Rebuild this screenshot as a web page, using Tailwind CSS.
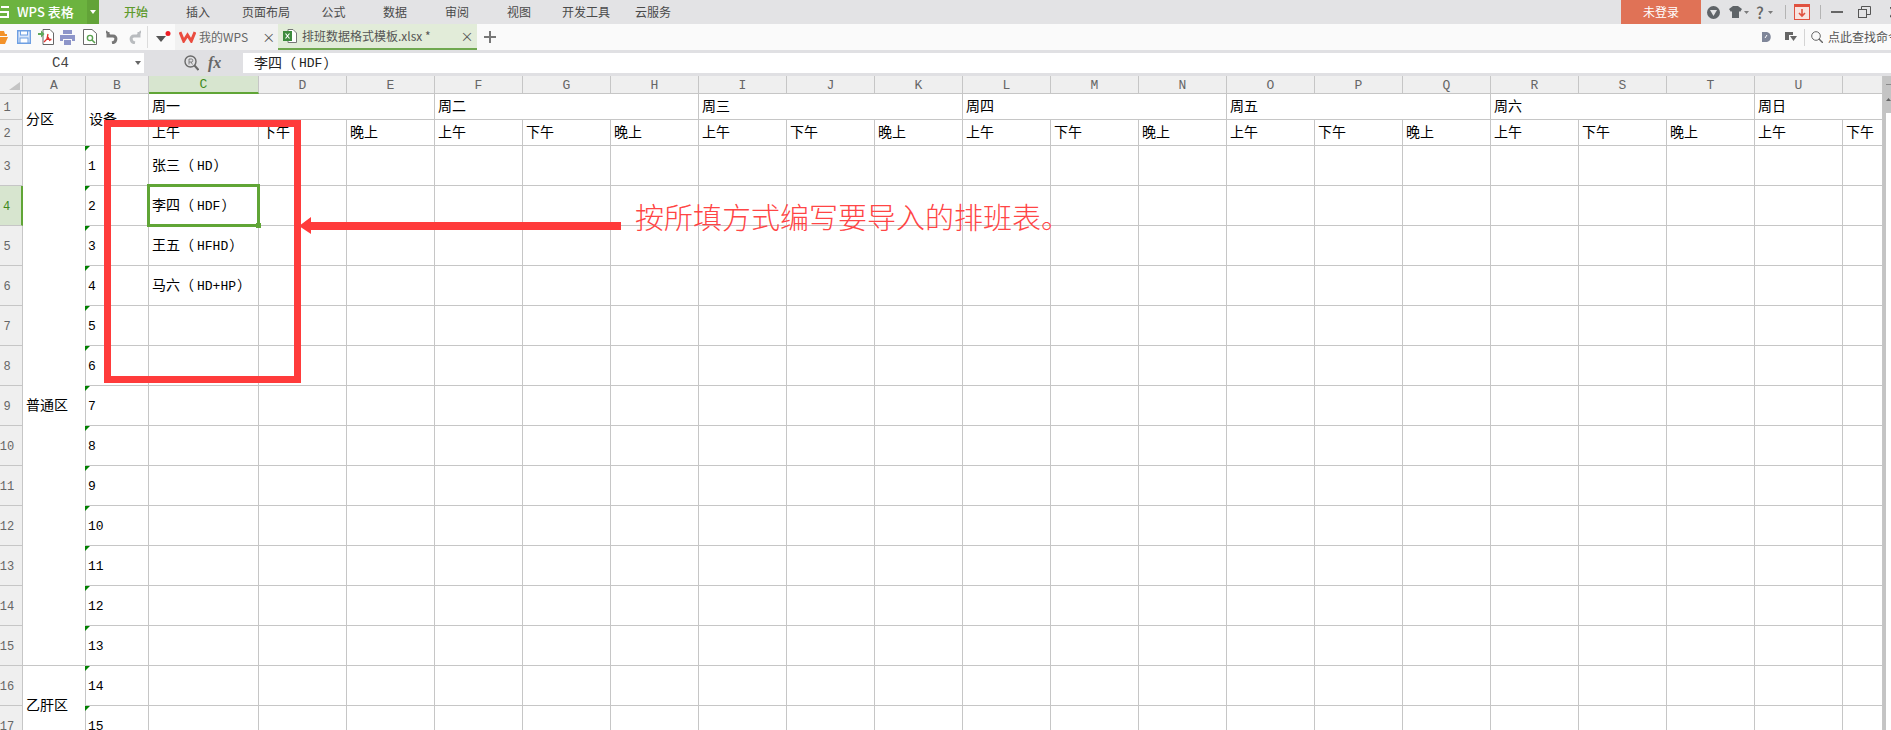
<!DOCTYPE html>
<html lang="zh">
<head>
<meta charset="utf-8">
<title>WPS 表格</title>
<script src="https://cdn.jsdelivr.net/npm/@tailwindcss/browser@4"></script>
</head>
<body class="m-0 overflow-hidden bg-white">
<div class="relative w-[1891px] h-[730px] overflow-hidden flex flex-col font-['Noto_Sans_CJK_SC','Noto_Sans',sans-serif]">

  <!-- ribbon tabs -->
  <div class="h-[24px] shrink-0 flex items-stretch bg-[#e3e3e5] text-[12px] text-[#4a4a4a]">
    <div class="w-[87px] bg-[#6cb33f] flex items-center text-white font-medium text-[13px]">
      <svg class="w-[9px] h-[12px] mr-[8px]" viewBox="0 0 9 12" fill="none" stroke="#fff" stroke-width="2"><path d="M9 1H1M0 6H8V11H0"/></svg>
      <span>WPS 表格</span>
    </div>
    <div class="w-[12px] bg-[#62a338] flex items-center justify-center"><svg class="w-[6px] h-[4px]" viewBox="0 0 6 4" fill="#fff"><path d="M0 0H6L3 4Z"/></svg></div>
    <div class="w-[6px]"></div>
    <div class="w-[62px] flex items-center justify-center font-medium text-[#5f9a2e]">开始</div>
    <div class="w-[62px] flex items-center justify-center">插入</div>
    <div class="w-[74px] flex items-center justify-center">页面布局</div>
    <div class="w-[61px] flex items-center justify-center">公式</div>
    <div class="w-[62px] flex items-center justify-center">数据</div>
    <div class="w-[62px] flex items-center justify-center">审阅</div>
    <div class="w-[62px] flex items-center justify-center">视图</div>
    <div class="w-[72px] flex items-center justify-center">开发工具</div>
    <div class="w-[62px] flex items-center justify-center">云服务</div>

    <div class="ml-auto w-[270px] flex items-stretch overflow-hidden">
      <div class="w-[80px] shrink-0 bg-[#e07256] text-white flex items-center justify-center">未登录</div>
      <div class="flex items-center shrink-0">
        <svg class="ml-[6px] w-[13px] h-[13px]" viewBox="0 0 13 13"><circle cx="6.5" cy="6.5" r="6.5" fill="#5f6468"/><path d="M3 4H10L6.5 10Z" fill="#e3e3e5"/></svg>
        <svg class="ml-[9px] w-[13px] h-[12px]" viewBox="0 0 13 12" fill="#5f6468"><path d="M4 0H9L13 3L11 6L10 5V12H3V5L2 6L0 3Z"/></svg>
        <svg class="ml-[2px] w-[5px] h-[3px]" viewBox="0 0 5 3" fill="#7b7b7b"><path d="M0 0H5L2.5 3Z"/></svg>
        <span class="ml-[7px] w-[9px] text-[16px] font-medium leading-none text-[#666]">?</span>
        <svg class="ml-[3px] w-[5px] h-[3px]" viewBox="0 0 5 3" fill="#7b7b7b"><path d="M0 0H5L2.5 3Z"/></svg>
        <div class="ml-[12px] w-px h-[14px] bg-[#b4b4b4]"></div>
        <svg class="ml-[8px] w-[16px] h-[16px]" viewBox="0 0 16 16" fill="none"><rect x=".5" y=".5" width="15" height="15" fill="#f8e4e0" stroke="#e0513f"/><rect width="16" height="3" fill="#e0513f"/><path d="M8 5V12M5 9L8 12L11 9" stroke="#e0513f" stroke-width="1.6"/></svg>
        <div class="ml-[10px] w-px h-[14px] bg-[#b4b4b4]"></div>
        <div class="ml-[10px] w-[12px] h-[2px] bg-[#666]"></div>
        <svg class="ml-[15px] w-[13px] h-[12px]" viewBox="0 0 13 12" fill="none" stroke="#555"><rect x=".5" y="3.5" width="8" height="8"/><path d="M3.5 3V.5H12.5V8.5H9"/></svg>
        <svg class="ml-[19px] w-[9px] h-[11px] shrink-0" viewBox="0 0 9 11" fill="none" stroke="#555" stroke-width="1.6"><path d="M0 0L8 10M8 0L0 10"/></svg>
      </div>
    </div>
  </div>

  <!-- quick access and document tabs -->
  <div class="h-[26px] shrink-0 flex items-stretch bg-[#fafafa] text-[12px] text-[#555]">
    <div class="w-[175px] flex items-center">
      <svg class="w-[8px] h-[13px]" viewBox="0 0 8 13"><path d="M0 0H4L5 3H7V5H0ZM0 6H8L5 13H0Z" fill="#f39229"/></svg>
      <svg class="ml-[9px] w-[14px] h-[14px]" viewBox="0 0 14 14"><path d="M.7.7H13.3V13.3H.7Z" fill="#d9e6fa" stroke="#6e9fe2" stroke-width="1.4"/><rect x="3.5" y="1" width="7" height="4" fill="#fff" stroke="#6e9fe2"/><rect x="3" y="8" width="8" height="5" fill="#fff" stroke="#6e9fe2"/></svg>
      <svg class="ml-[7px] w-[16px] h-[16px]" viewBox="0 0 16 16"><path d="M5 .5H12L15.5 4V15.5H5Z" fill="#fff" stroke="#666"/><path d="M0 4H3V1.5L6.5 5L3 8.5V6H0Z" fill="#5fa85a"/><path d="M10 5L9 10L6 13M9 10L13.5 10.5M10 8L12 12" fill="none" stroke="#e0302c" stroke-width="1.3"/></svg>
      <svg class="ml-[6px] w-[15px] h-[15px]" viewBox="0 0 15 15" fill="#8d95c9"><rect x="3" y="0" width="9" height="4"/><path d="M0 5H15V11H12V9H3V11H0Z"/><rect x="4" y="10" width="7" height="5"/></svg>
      <svg class="ml-[8px] w-[14px] h-[16px]" viewBox="0 0 14 16" fill="none"><path d="M.5.5H9L13.5 4.5V15.5H.5Z" fill="#fff" stroke="#6a6a6a"/><circle cx="7" cy="9" r="2.6" stroke="#59a14f" stroke-width="1.4"/><path d="M9 11L12 14" stroke="#59a14f" stroke-width="1.6"/></svg>
      <svg class="ml-[9px] w-[12px] h-[14px]" viewBox="0 0 12 14" fill="none" stroke="#777" stroke-width="3"><path d="M2 2V6H7C11 6 11 12 6 13"/><path d="M0 1L4 6" stroke-width="2"/></svg>
      <svg class="ml-[10px] w-[13px] h-[14px]" viewBox="0 0 13 14" fill="none" stroke="#b9bcbf" stroke-width="3"><path d="M11 2V6H6C2 6 2 12 7 13"/><path d="M13 1L9 6" stroke-width="2"/></svg>
      <div class="ml-[6px] w-px h-[22px] bg-[#dcdcdc]"></div>
      <svg class="ml-[8px] w-[15px] h-[13px]" viewBox="0 0 15 13"><path d="M0 5H10L5 11Z" fill="#555"/><circle cx="12" cy="2.5" r="2.5" fill="#ee1c25"/></svg>
    </div>
    <div class="w-[103px] bg-[#f1f1f1] flex items-center">
      <svg class="ml-[4px] w-[17px] h-[12px]" viewBox="0 0 17 12" fill="none" stroke="#ea4c3f" stroke-width="3"><path d="M1 1L4.7 10L8.5 4L12.3 10L16 1"/></svg>
      <span class="ml-[3px] text-[12px] text-[#666]">我的WPS</span>
      <span class="ml-[14px] text-[13px] text-[#555]">×</span>
    </div>
    <div class="w-[199px] bg-[#e2ecd9] border-b-2 border-[#6fa84f] flex items-center">
      <svg class="ml-[5px] w-[14px] h-[14px]" viewBox="0 0 14 14"><path d="M5 .5H10L13.5 4V13.5H5Z" fill="#fff" stroke="#777"/><rect x="0" y="2" width="9" height="10" fill="#3d8b3d"/><path d="M2.5 4.5L6.5 9.5M6.5 4.5L2.5 9.5" stroke="#fff" stroke-width="1.2"/></svg>
      <span class="ml-[5px] text-[#555]">排班数据格式模板.xlsx *</span>
      <span class="ml-[30px] text-[13px] text-[#555]">×</span>
    </div>
    <svg class="ml-[7px] self-center w-[12px] h-[12px]" viewBox="0 0 12 12" fill="#777"><path d="M5 0H7V5H12V7H7V12H5V7H0V5H5Z"/></svg>

    <div class="ml-auto w-[129px] flex items-center overflow-hidden">
      <svg class="w-[9px] h-[10px] shrink-0" viewBox="0 0 9 10"><path d="M0 0H5C10 1 10 9 5 10H0Z" fill="#7f8699"/><path d="M3 6L5 3" stroke="#fff"/></svg>
      <svg class="ml-[14px] w-[12px] h-[10px] shrink-0" viewBox="0 0 12 10" fill="#666"><path d="M0 0H8V3H4V8H0Z"/><path d="M5 4H12L8.5 9Z"/></svg>
      <div class="ml-[7px] w-px h-[17px] bg-[#d4d4d4] shrink-0"></div>
      <svg class="ml-[6px] w-[12px] h-[12px] shrink-0" viewBox="0 0 12 12" fill="none" stroke="#666"><circle cx="5" cy="5" r="4.3"/><path d="M8 8L12 12" stroke-width="1.4"/></svg>
      <span class="ml-[5px] whitespace-nowrap text-[#555]">点此查找命令</span>
    </div>
  </div>

  <!-- formula bar -->
  <div class="h-[26px] shrink-0 flex bg-[#e0e0e3] pt-[3px] pb-[3px]">
    <div class="relative w-[144px] bg-white flex items-center text-[14px] text-[#444] font-['Liberation_Mono',monospace]">
      <span class="ml-[52px]">C4</span>
      <svg class="absolute right-[3px] top-[8px] w-[6px] h-[4px]" viewBox="0 0 6 4" fill="#666"><path d="M0 0H6L3 4Z"/></svg>
    </div>
    <div class="w-[99px] flex items-center">
      <svg class="ml-[40px] w-[15px] h-[16px]" viewBox="0 0 15 16" fill="none" stroke="#6a6a6a"><circle cx="6.5" cy="6.5" r="5.5" stroke-width="1.4"/><path d="M10.5 10.5L14.5 15" stroke-width="2"/><path d="M5 9.5V4H8C9 4 9 7 8 7H5M7 7L8.5 9.5" stroke-width=".8"/></svg>
      <span class="ml-[9px] text-[16px] italic font-bold text-[#666] font-['Liberation_Serif',serif]">fx</span>
    </div>
    <div class="flex-1 bg-white flex items-center pl-[11px] pt-[2px] text-[14px] text-[#222] font-['Liberation_Mono','Noto_Sans_CJK_SC',monospace]">李四（<span class="text-[13px] ml-[3px] mr-[1px]">HDF</span>）</div>
  </div>

  <!-- sheet -->
  <div class="flex-1 min-h-0 flex items-start overflow-hidden">
    <div class="w-[1883px] shrink-0 grid grid-cols-[23px_63px_63px_110px_repeat(18,88px)_1fr] grid-rows-[18px_26px_26px_repeat(15,40px)] text-[14px] text-black font-['Liberation_Mono','Noto_Sans_CJK_SC',monospace] [&>div]:pt-[2px] [&>div]:border-r [&>div]:border-b [&>div]:border-[#c6c6c6]">
      <!-- column headers -->
      <div class="bg-[#efefef] flex items-center justify-center"><svg class="w-[11px] h-[8px] ml-[6px]" viewBox="0 0 11 8" fill="#c4c4c4"><path d="M11 0V8H0Z"/></svg></div>
      <div class="bg-[#efefef] text-[13px] text-[#666] flex items-center justify-center">A</div>
      <div class="bg-[#efefef] text-[13px] text-[#666] flex items-center justify-center">B</div>
      <div class="bg-[#d7e5cf] text-[13px] text-[#3f8a1c] flex items-center justify-center border-b-2! border-b-[#60a536]!">C</div>
      <div class="bg-[#efefef] text-[13px] text-[#666] flex items-center justify-center">D</div>
      <div class="bg-[#efefef] text-[13px] text-[#666] flex items-center justify-center">E</div>
      <div class="bg-[#efefef] text-[13px] text-[#666] flex items-center justify-center">F</div>
      <div class="bg-[#efefef] text-[13px] text-[#666] flex items-center justify-center">G</div>
      <div class="bg-[#efefef] text-[13px] text-[#666] flex items-center justify-center">H</div>
      <div class="bg-[#efefef] text-[13px] text-[#666] flex items-center justify-center">I</div>
      <div class="bg-[#efefef] text-[13px] text-[#666] flex items-center justify-center">J</div>
      <div class="bg-[#efefef] text-[13px] text-[#666] flex items-center justify-center">K</div>
      <div class="bg-[#efefef] text-[13px] text-[#666] flex items-center justify-center">L</div>
      <div class="bg-[#efefef] text-[13px] text-[#666] flex items-center justify-center">M</div>
      <div class="bg-[#efefef] text-[13px] text-[#666] flex items-center justify-center">N</div>
      <div class="bg-[#efefef] text-[13px] text-[#666] flex items-center justify-center">O</div>
      <div class="bg-[#efefef] text-[13px] text-[#666] flex items-center justify-center">P</div>
      <div class="bg-[#efefef] text-[13px] text-[#666] flex items-center justify-center">Q</div>
      <div class="bg-[#efefef] text-[13px] text-[#666] flex items-center justify-center">R</div>
      <div class="bg-[#efefef] text-[13px] text-[#666] flex items-center justify-center">S</div>
      <div class="bg-[#efefef] text-[13px] text-[#666] flex items-center justify-center">T</div>
      <div class="bg-[#efefef] text-[13px] text-[#666] flex items-center justify-center">U</div>
      <div class="bg-[#efefef]"></div>

      <!-- row 1 -->
      <div class="bg-[#efefef] text-[12px] text-[#666] flex items-center justify-center pr-[8px]">1</div>
      <div class="row-span-2 flex items-center pl-[3px]">分区</div>
      <div class="row-span-2 flex items-center pl-[3px]">设备</div>
      <div class="col-span-3 flex items-center pl-[3px]">周一</div>
      <div class="col-span-3 flex items-center pl-[3px]">周二</div>
      <div class="col-span-3 flex items-center pl-[3px]">周三</div>
      <div class="col-span-3 flex items-center pl-[3px]">周四</div>
      <div class="col-span-3 flex items-center pl-[3px]">周五</div>
      <div class="col-span-3 flex items-center pl-[3px]">周六</div>
      <div class="col-span-2 flex items-center pl-[3px]">周日</div>

      <!-- row 2 -->
      <div class="bg-[#efefef] text-[12px] text-[#666] flex items-center justify-center pr-[8px]">2</div>
      <div class="flex items-center pl-[3px]">上午</div><div class="flex items-center pl-[3px]">下午</div><div class="flex items-center pl-[3px]">晚上</div>
      <div class="flex items-center pl-[3px]">上午</div><div class="flex items-center pl-[3px]">下午</div><div class="flex items-center pl-[3px]">晚上</div>
      <div class="flex items-center pl-[3px]">上午</div><div class="flex items-center pl-[3px]">下午</div><div class="flex items-center pl-[3px]">晚上</div>
      <div class="flex items-center pl-[3px]">上午</div><div class="flex items-center pl-[3px]">下午</div><div class="flex items-center pl-[3px]">晚上</div>
      <div class="flex items-center pl-[3px]">上午</div><div class="flex items-center pl-[3px]">下午</div><div class="flex items-center pl-[3px]">晚上</div>
      <div class="flex items-center pl-[3px]">上午</div><div class="flex items-center pl-[3px]">下午</div><div class="flex items-center pl-[3px]">晚上</div>
      <div class="flex items-center pl-[3px]">上午</div><div class="flex items-center pl-[3px]">下午</div>

      <!-- row 3 -->
      <div class="bg-[#efefef] text-[12px] text-[#666] flex items-center justify-center pr-[8px]">3</div>
      <div class="row-span-13 flex items-center pl-[3px]">普通区</div>
      <div class="relative flex items-center pl-[2px]"><i class="absolute -left-px top-0 w-[5px] h-[5px] bg-[#008000] [clip-path:polygon(0_0,100%_0,0_100%)]"></i><span class="text-[13px]">1</span></div>
      <div class="flex items-center pl-[3px]">张三（<span class="text-[13px] ml-[3px] mr-[1px]">HD</span>）</div><div></div><div></div><div></div><div></div><div></div><div></div><div></div><div></div><div></div><div></div><div></div><div></div><div></div><div></div><div></div><div></div><div></div><div></div><div></div>

      <!-- row 4 -->
      <div class="bg-[#d7e5cf] text-[12px] text-[#3f8a1c] flex items-center justify-center pr-[8px] border-r-2! border-r-[#60a536]!">4</div>
      <div class="relative flex items-center pl-[2px]"><i class="absolute -left-px top-0 w-[5px] h-[5px] bg-[#008000] [clip-path:polygon(0_0,100%_0,0_100%)]"></i><span class="text-[13px]">2</span></div>
      <div class="flex items-center pl-[3px]">李四（<span class="text-[13px] ml-[3px] mr-[1px]">HDF</span>）</div><div></div><div></div><div></div><div></div><div></div><div></div><div></div><div></div><div></div><div></div><div></div><div></div><div></div><div></div><div></div><div></div><div></div><div></div><div></div>

      <!-- row 5 -->
      <div class="bg-[#efefef] text-[12px] text-[#666] flex items-center justify-center pr-[8px]">5</div>
      <div class="relative flex items-center pl-[2px]"><i class="absolute -left-px top-0 w-[5px] h-[5px] bg-[#008000] [clip-path:polygon(0_0,100%_0,0_100%)]"></i><span class="text-[13px]">3</span></div>
      <div class="flex items-center pl-[3px]">王五（<span class="text-[13px] ml-[3px] mr-[1px]">HFHD</span>）</div><div></div><div></div><div></div><div></div><div></div><div></div><div></div><div></div><div></div><div></div><div></div><div></div><div></div><div></div><div></div><div></div><div></div><div></div><div></div>

      <!-- row 6 -->
      <div class="bg-[#efefef] text-[12px] text-[#666] flex items-center justify-center pr-[8px]">6</div>
      <div class="relative flex items-center pl-[2px]"><i class="absolute -left-px top-0 w-[5px] h-[5px] bg-[#008000] [clip-path:polygon(0_0,100%_0,0_100%)]"></i><span class="text-[13px]">4</span></div>
      <div class="flex items-center pl-[3px]">马六（<span class="text-[13px] ml-[3px] mr-[1px]">HD+HP</span>）</div><div></div><div></div><div></div><div></div><div></div><div></div><div></div><div></div><div></div><div></div><div></div><div></div><div></div><div></div><div></div><div></div><div></div><div></div><div></div>

      <!-- row 7 -->
      <div class="bg-[#efefef] text-[12px] text-[#666] flex items-center justify-center pr-[8px]">7</div>
      <div class="relative flex items-center pl-[2px]"><i class="absolute -left-px top-0 w-[5px] h-[5px] bg-[#008000] [clip-path:polygon(0_0,100%_0,0_100%)]"></i><span class="text-[13px]">5</span></div>
      <div></div><div></div><div></div><div></div><div></div><div></div><div></div><div></div><div></div><div></div><div></div><div></div><div></div><div></div><div></div><div></div><div></div><div></div><div></div><div></div>

      <!-- row 8 -->
      <div class="bg-[#efefef] text-[12px] text-[#666] flex items-center justify-center pr-[8px]">8</div>
      <div class="relative flex items-center pl-[2px]"><i class="absolute -left-px top-0 w-[5px] h-[5px] bg-[#008000] [clip-path:polygon(0_0,100%_0,0_100%)]"></i><span class="text-[13px]">6</span></div>
      <div></div><div></div><div></div><div></div><div></div><div></div><div></div><div></div><div></div><div></div><div></div><div></div><div></div><div></div><div></div><div></div><div></div><div></div><div></div><div></div>

      <!-- row 9 -->
      <div class="bg-[#efefef] text-[12px] text-[#666] flex items-center justify-center pr-[8px]">9</div>
      <div class="relative flex items-center pl-[2px]"><i class="absolute -left-px top-0 w-[5px] h-[5px] bg-[#008000] [clip-path:polygon(0_0,100%_0,0_100%)]"></i><span class="text-[13px]">7</span></div>
      <div></div><div></div><div></div><div></div><div></div><div></div><div></div><div></div><div></div><div></div><div></div><div></div><div></div><div></div><div></div><div></div><div></div><div></div><div></div><div></div>

      <!-- row 10 -->
      <div class="bg-[#efefef] text-[12px] text-[#666] flex items-center justify-center pr-[8px]">10</div>
      <div class="relative flex items-center pl-[2px]"><i class="absolute -left-px top-0 w-[5px] h-[5px] bg-[#008000] [clip-path:polygon(0_0,100%_0,0_100%)]"></i><span class="text-[13px]">8</span></div>
      <div></div><div></div><div></div><div></div><div></div><div></div><div></div><div></div><div></div><div></div><div></div><div></div><div></div><div></div><div></div><div></div><div></div><div></div><div></div><div></div>

      <!-- row 11 -->
      <div class="bg-[#efefef] text-[12px] text-[#666] flex items-center justify-center pr-[8px]">11</div>
      <div class="relative flex items-center pl-[2px]"><i class="absolute -left-px top-0 w-[5px] h-[5px] bg-[#008000] [clip-path:polygon(0_0,100%_0,0_100%)]"></i><span class="text-[13px]">9</span></div>
      <div></div><div></div><div></div><div></div><div></div><div></div><div></div><div></div><div></div><div></div><div></div><div></div><div></div><div></div><div></div><div></div><div></div><div></div><div></div><div></div>

      <!-- row 12 -->
      <div class="bg-[#efefef] text-[12px] text-[#666] flex items-center justify-center pr-[8px]">12</div>
      <div class="relative flex items-center pl-[2px]"><i class="absolute -left-px top-0 w-[5px] h-[5px] bg-[#008000] [clip-path:polygon(0_0,100%_0,0_100%)]"></i><span class="text-[13px]">10</span></div>
      <div></div><div></div><div></div><div></div><div></div><div></div><div></div><div></div><div></div><div></div><div></div><div></div><div></div><div></div><div></div><div></div><div></div><div></div><div></div><div></div>

      <!-- row 13 -->
      <div class="bg-[#efefef] text-[12px] text-[#666] flex items-center justify-center pr-[8px]">13</div>
      <div class="relative flex items-center pl-[2px]"><i class="absolute -left-px top-0 w-[5px] h-[5px] bg-[#008000] [clip-path:polygon(0_0,100%_0,0_100%)]"></i><span class="text-[13px]">11</span></div>
      <div></div><div></div><div></div><div></div><div></div><div></div><div></div><div></div><div></div><div></div><div></div><div></div><div></div><div></div><div></div><div></div><div></div><div></div><div></div><div></div>

      <!-- row 14 -->
      <div class="bg-[#efefef] text-[12px] text-[#666] flex items-center justify-center pr-[8px]">14</div>
      <div class="relative flex items-center pl-[2px]"><i class="absolute -left-px top-0 w-[5px] h-[5px] bg-[#008000] [clip-path:polygon(0_0,100%_0,0_100%)]"></i><span class="text-[13px]">12</span></div>
      <div></div><div></div><div></div><div></div><div></div><div></div><div></div><div></div><div></div><div></div><div></div><div></div><div></div><div></div><div></div><div></div><div></div><div></div><div></div><div></div>

      <!-- row 15 -->
      <div class="bg-[#efefef] text-[12px] text-[#666] flex items-center justify-center pr-[8px]">15</div>
      <div class="relative flex items-center pl-[2px]"><i class="absolute -left-px top-0 w-[5px] h-[5px] bg-[#008000] [clip-path:polygon(0_0,100%_0,0_100%)]"></i><span class="text-[13px]">13</span></div>
      <div></div><div></div><div></div><div></div><div></div><div></div><div></div><div></div><div></div><div></div><div></div><div></div><div></div><div></div><div></div><div></div><div></div><div></div><div></div><div></div>

      <!-- row 16 -->
      <div class="bg-[#efefef] text-[12px] text-[#666] flex items-center justify-center pr-[8px]">16</div>
      <div class="row-span-2 flex items-center pl-[3px]">乙肝区</div>
      <div class="relative flex items-center pl-[2px]"><i class="absolute -left-px top-0 w-[5px] h-[5px] bg-[#008000] [clip-path:polygon(0_0,100%_0,0_100%)]"></i><span class="text-[13px]">14</span></div>
      <div></div><div></div><div></div><div></div><div></div><div></div><div></div><div></div><div></div><div></div><div></div><div></div><div></div><div></div><div></div><div></div><div></div><div></div><div></div><div></div>

      <!-- row 17 -->
      <div class="bg-[#efefef] text-[12px] text-[#666] flex items-center justify-center pr-[8px]">17</div>
      <div class="relative flex items-center pl-[2px]"><i class="absolute -left-px top-0 w-[5px] h-[5px] bg-[#008000] [clip-path:polygon(0_0,100%_0,0_100%)]"></i><span class="text-[13px]">15</span></div>
      <div></div><div></div><div></div><div></div><div></div><div></div><div></div><div></div><div></div><div></div><div></div><div></div><div></div><div></div><div></div><div></div><div></div><div></div><div></div><div></div>
    </div>

    <!-- scrollbar -->
    <div class="w-[8px] h-full shrink-0 bg-white border-l-[3px] border-[#c4c4c4]">
      <div class="h-[37px] bg-[#c4c4c4] flex flex-col items-center">
        <div class="mt-[8px] w-[5px] h-px bg-[#8a8a8a]"></div>
        <svg class="mt-[13px] w-[5px] h-[3px]" viewBox="0 0 5 3" fill="#666"><path d="M0 3H5L2.5 0Z"/></svg>
      </div>
    </div>
  </div>

  <!-- selection cell over the sheet -->
  <div class="absolute left-[147px] top-[184px] w-[113px] h-[43px] border-[3px] border-[#60a536]"></div>
  <div class="absolute left-[256px] top-[223px] w-[5px] h-[5px] bg-[#60a536]"></div>

  <!-- red annotations over the sheet -->
  <div class="absolute left-[104px] top-[120px] w-[197px] h-[263px] border-[7px] border-[#ff3b3b]"></div>
  <svg class="absolute left-[299px] top-[216px] w-[322px] h-[18px]" viewBox="0 0 322 18" fill="#ff3b3b"><path d="M0 10L12 1V6H322V14H12V18Z"/></svg>
  <div class="absolute left-[635px] top-[197px] text-[29px] leading-[38px] font-light whitespace-nowrap text-[#ff4545] font-['Noto_Sans_CJK_SC',sans-serif]">按所填方式编写要导入的排班表。</div>
</div>
</body>
</html>
